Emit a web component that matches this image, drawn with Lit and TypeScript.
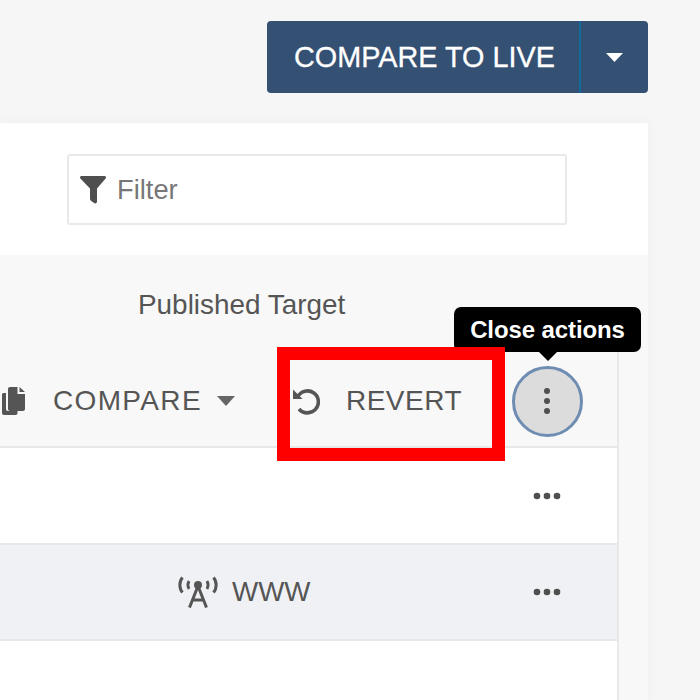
import { LitElement, html, css } from "lit";
import { customElement } from "lit/decorators.js";

const dots = html`<svg class="more" width="28" height="8" viewBox="0 0 28 8"><circle cx="4" cy="4" r="3.300"/><circle cx="14" cy="4" r="3.300"/><circle cx="24" cy="4" r="3.300"/></svg>`;

@customElement("app-root")
export class AppRoot extends LitElement {
  static styles = css`
    :host { display: block; position: relative; width: 700px; height: 700px; overflow: hidden; background: #f6f6f6; font-family: "Liberation Sans", Arial, sans-serif; color: #555; }
    .top { display: flex; justify-content: flex-end; padding: 21px 52px 30px 0; }
    .split { display: flex; height: 72px; width: 381px; background: #345073; border-radius: 4px; color: #fff; }
    .main { flex: 1; display: flex; align-items: center; padding-left: 27px; font-size: 28.800px; border-right: 2px solid #136a9a; -webkit-text-stroke: 0.3px #fff; }
    .drop { width: 67px; display: flex; align-items: center; justify-content: center; }
    .panel { width: 648px; height: 577px; background: #f8f8f8; display: flex; flex-direction: column; box-shadow: 0 0 14px rgba(0, 0, 0, 0.035); }
    .filterbar { height: 132px; background: #fff; display: flex; padding: 31px 0 0 67px; box-sizing: border-box; }
    .filter { width: 500px; height: 71px; box-sizing: border-box; background: #fff; border: 2px solid #e9e9e9; border-radius: 3px; display: flex; align-items: center; gap: 11px; padding-left: 11px; font-size: 27.300px; color: #777; }
    .head { height: 193px; box-sizing: border-box; display: flex; flex-direction: column; width: 619px; border-bottom: 2px solid #e8e8e8; }
    .title { height: 97px; padding-left: 138px; padding-top: 35px; box-sizing: border-box; font-size: 27.900px; line-height: 30px; color: #555; }
    .actions { flex: 1; display: flex; align-items: center; padding-top: 4px; font-size: 28px; letter-spacing: 1.350px; color: #555; border-right: 2px solid #e8e8e8; }
    .actions svg { flex: none; }
    .copy { margin-left: 2px; margin-right: 28px; }
    .caret { margin: 0 0 0 15px; }
    .undo { margin-left: 57px; margin-right: 26px; }
    .revert { letter-spacing: 0.500px; }
    .kebab { margin-left: 50px; width: 71px; height: 71px; box-sizing: border-box; border-radius: 50%; background: #dcdcdc; border: 3px solid #6f8db2; display: flex; align-items: center; justify-content: center; flex: none; }
    .kebab svg { fill: #4f4f4f; }
    .body { flex: 1; width: 619px; box-sizing: border-box; border-right: 2px solid #e8e8e8; background: #fff; }
    .row { height: 97px; box-sizing: border-box; border-bottom: 2px solid #e8e8e8; display: flex; align-items: center; }
    .row.alt { background: #f0f1f5; height: 96px; }
    .cell { flex: 1; display: flex; align-items: center; padding-left: 178px; gap: 14px; font-size: 27.700px; color: #555; }
    .more { fill: #4f4f4f; margin-right: 56px; flex: none; }
    .tip { position: absolute; left: 454px; top: 307px; width: 187px; height: 45px; background: #000; color: #fff; border-radius: 7px; display: flex; align-items: center; justify-content: center; font-size: 24px; font-weight: 700; letter-spacing: -0.100px; }
    .tip::after { content: ""; position: absolute; left: 85px; top: 45px; border: 9px solid transparent; border-top-color: #000; border-bottom: 0; }
    .mark { position: absolute; left: 277px; top: 347px; width: 228px; height: 114px; box-sizing: border-box; border: 13px solid #ff0000; }
  `;

  render() {
    return html`
      <div class="top">
        <div class="split">
          <div class="main">COMPARE TO LIVE</div>
          <div class="drop"><svg width="17" height="9" viewBox="0 0 17 9"><path d="M0 0h17L8.500 9z" fill="#fff"/></svg></div>
        </div>
      </div>
      <div class="panel">
        <div class="filterbar">
          <div class="filter">
            <svg width="26" height="28" viewBox="0 0 26 28"><path d="M0 1.500C0 .700.700 0 1.500 0h23c.800 0 1.500.700 1.500 1.500 0 .400-.100.700-.400 1L17 12.500V25.500c0 1.500-1.300 2.500-2.500 1.800l-3.300-2.200c-.800-.500-1.200-1.200-1.200-2v-10.600L.400 2.500C.100 2.200 0 1.900 0 1.500z" fill="#4f4f4f"/></svg>
            <span>Filter</span>
          </div>
        </div>
        <div class="head">
          <div class="title">Published Target</div>
          <div class="actions">
            <svg class="copy" width="23" height="28" viewBox="0 0 23 28"><path d="M0 7.500C0 6.500.800 6 1.500 6H4v16c0 1.100.900 2 2 2h9.500v2c0 1.100-.800 2-1.800 2H2c-1.200 0-2-.900-2-2z" fill="#555"/><path d="M6 2c0-1.100.900-2 2-2h7.500v7H23v15c0 1.100-.900 2-2 2H8c-1.100 0-2-.900-2-2zM17.500 0L23 5h-5.500z" fill="#555"/></svg>
            <span>COMPARE</span>
            <svg class="caret" width="18" height="10" viewBox="0 0 18 10"><path d="M0 0h18L9 10z" fill="#666"/></svg>
            <svg class="undo" width="28" height="28" viewBox="0 0 28 28"><path d="M5.800 9.500A11 11 0 1 1 7 22" fill="none" stroke="#555" stroke-width="3.600"/><path d="M1 2.500V12h9.500z" fill="#555"/></svg>
            <span class="revert">REVERT</span>
            <div class="kebab"><svg width="8" height="28" viewBox="0 0 8 28"><circle cx="3" cy="4" r="3"/><circle cx="3" cy="14" r="3"/><circle cx="3" cy="24" r="3"/></svg></div>
          </div>
        </div>
        <div class="body">
          <div class="row"><div class="cell"></div>${dots}</div>
          <div class="row alt">
            <div class="cell">
              <svg width="40" height="32" viewBox="0 0 40 32"><g fill="none" stroke="#555"><path d="M4.500 1.500c-3.500 4-3.500 11 0 15M35.500 1.500c3.500 4 3.500 11 0 15" stroke-width="3"/><path d="M11 5c-1.400 2.500-1.400 5.500 0 8M29 5c1.400 2.500 1.400 5.500 0 8" stroke-width="2.800"/><path d="M20 10L11.500 31.500M20 10l8.500 21.500M14.500 24h11" stroke-width="3"/></g><circle cx="20" cy="9" r="4" fill="#555"/></svg>
              <span>WWW</span>
            </div>
            ${dots}
          </div>
        </div>
      </div>
      <div class="tip">Close actions</div>
      <div class="mark"></div>
    `;
  }
}
